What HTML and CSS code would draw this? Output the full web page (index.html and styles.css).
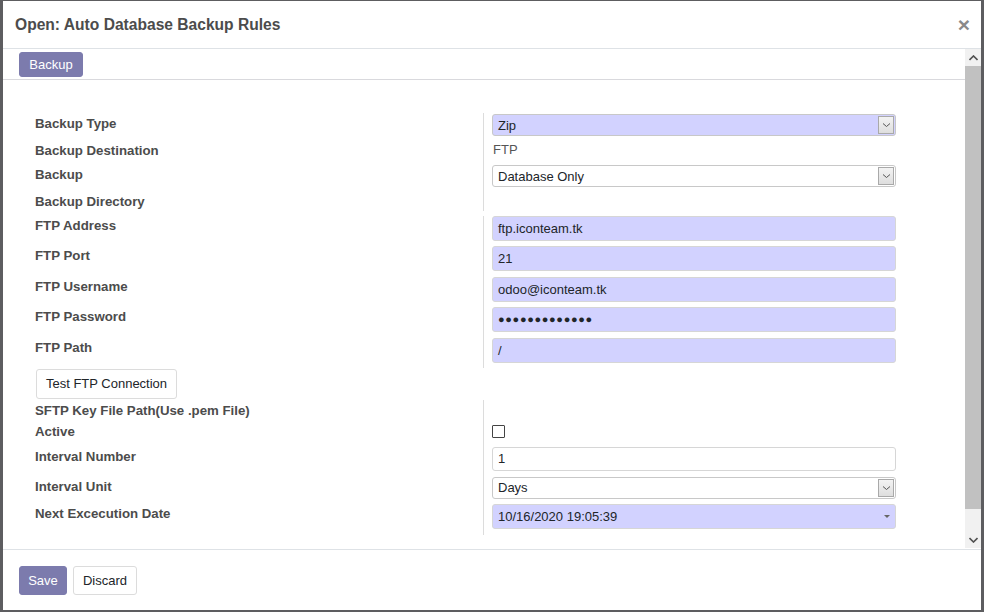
FILE: index.html
```html
<!DOCTYPE html>
<html>
<head>
<meta charset="utf-8">
<link rel="stylesheet" href="styles.css">
</head>
<body>
<div class="modal">
  <div class="modal-header">
    <h4 class="modal-title">Open: Auto Database Backup Rules</h4>
    <span class="close">×</span>
  </div>
  <div class="modal-body">
    <div class="content">
      <div class="statusbar">
        <button class="btn btn-primary">Backup</button>
      </div>
      <div class="sheet">
        <div class="group">
          <div class="row r1"><div class="label">Backup Type</div><div class="field"><div class="select req"><span>Zip</span><span class="arrow"><svg width="9" height="6" viewBox="0 0 9 6"><path d="M1 1.5 L4.5 4.5 L8 1.5" fill="none" stroke="#555" stroke-width="1"/></svg></span></div></div></div>
          <div class="row r2"><div class="label">Backup Destination</div><div class="field"><span class="value">FTP</span></div></div>
          <div class="row r3"><div class="label">Backup</div><div class="field"><div class="select"><span>Database Only</span><span class="arrow"><svg width="9" height="6" viewBox="0 0 9 6"><path d="M1 1.5 L4.5 4.5 L8 1.5" fill="none" stroke="#555" stroke-width="1"/></svg></span></div></div></div>
          <div class="row r4"><div class="label">Backup Directory</div><div class="field"></div></div>
        </div>
        <div class="group g2">
          <div class="row r5"><div class="label">FTP Address</div><div class="field"><div class="input req">ftp.iconteam.tk</div></div></div>
          <div class="row r5"><div class="label">FTP Port</div><div class="field"><div class="input req">21</div></div></div>
          <div class="row r5"><div class="label">FTP Username</div><div class="field"><div class="input req">odoo@iconteam.tk</div></div></div>
          <div class="row r5"><div class="label">FTP Password</div><div class="field"><div class="input req pw">●●●●●●●●●●●●●</div></div></div>
          <div class="row r5"><div class="label">FTP Path</div><div class="field"><div class="input req">/</div></div></div>
        </div>
        <div class="btnrow"><button class="btn btn-secondary test">Test FTP Connection</button></div>
        <div class="group">
          <div class="row r6"><div class="label">SFTP Key File Path(Use .pem File)</div><div class="field"></div></div>
        </div>
        <div class="group g4">
          <div class="row r7"><div class="label">Active</div><div class="field"><div class="checkbox"></div></div></div>
          <div class="row r8"><div class="label">Interval Number</div><div class="field"><div class="input">1</div></div></div>
          <div class="row r9"><div class="label">Interval Unit</div><div class="field"><div class="select"><span>Days</span><span class="arrow"><svg width="9" height="6" viewBox="0 0 9 6"><path d="M1 1.5 L4.5 4.5 L8 1.5" fill="none" stroke="#555" stroke-width="1"/></svg></span></div></div></div>
          <div class="row r10"><div class="label">Next Excecution Date</div><div class="field"><div class="input req date"><span>10/16/2020 19:05:39</span><span class="caret"></span></div></div></div>
        </div>
      </div>
    </div>
    <div class="scrollbar">
      <div class="sb-btn"><svg width="9" height="6" viewBox="0 0 9 6"><path d="M0.5 5 L4.5 1 L8.5 5" fill="none" stroke="#505050" stroke-width="1.6"/></svg></div>
      <div class="sb-thumb"></div>
      <div class="sb-track"></div>
      <div class="sb-btn"><svg width="9" height="6" viewBox="0 0 9 6"><path d="M0.5 1 L4.5 5 L8.5 1" fill="none" stroke="#505050" stroke-width="1.6"/></svg></div>
    </div>
  </div>
  <div class="modal-footer">
    <button class="btn btn-primary save">Save</button>
    <button class="btn btn-secondary discard">Discard</button>
  </div>
</div>
</body>
</html>
```
FILE: styles.css
```css
html, body {
  margin: 0;
  padding: 0;
}
body {
  background: #5d5d60;
  font-family: "Liberation Sans", Arial, sans-serif;
  font-size: 13px;
  color: #212529;
  width: 984px;
  height: 612px;
  overflow: hidden;
}
.modal {
  margin: 1px 3px 0 3px;
  width: 978px;
  height: 609px;
  background: #fff;
  display: flex;
  flex-direction: column;
}
.modal-header {
  height: 47px;
  border-bottom: 1px solid #dee2e6;
  display: flex;
  align-items: center;
  justify-content: space-between;
  padding: 0 11px 0 12px;
  flex-shrink: 0;
}
.modal-title {
  margin: 0;
  font-size: 15.6px;
  font-weight: bold;
  color: #4c4c4c;
}
.close {
  font-size: 21px;
  font-weight: bold;
  color: #8a8a8a;
  line-height: 1;
  margin-top: -1px;
}
.modal-body {
  flex: 1;
  display: flex;
  overflow: hidden;
}
.content {
  flex: 1;
  min-width: 0;
}
.statusbar {
  height: 27px;
  padding: 3px 16px 0;
  border-bottom: 1px solid #d9d9dd;
}
.btn {
  font-family: "Liberation Sans", Arial, sans-serif;
  font-size: 13px;
  border-radius: 3px;
  border: 1px solid transparent;
  padding: 0 10px;
  cursor: pointer;
}
.btn-primary {
  background: #7c7bad;
  color: #fff;
  border-color: #7c7bad;
}
.btn-secondary {
  background: #fff;
  color: #212529;
  border-color: #dcdcdc;
}
.statusbar .btn {
  height: 25px;
  width: 64px;
  padding: 0;
}
.sheet {
  padding: 33px 0 0 32px;
}
.group {
  display: flex;
  flex-direction: column;
}
.g2 {
  margin-top: 5px;
}
.row {
  display: flex;
}
.label {
  width: 448px;
  font-weight: bold;
  font-size: 13.25px;
  color: #4c4c4c;
  line-height: 18px;
  white-space: nowrap;
  margin-top: 1px;
}
.field {
  border-left: 1px solid #dcdcdc;
  padding-left: 8px;
  width: 404px;
}
.r1 .label, .r1 .field { padding-top: 1px; }
.r1 { height: 25px; }
.r2 .label, .r2 .field { padding-top: 3px; }
.r2 { height: 24px; }
.r3 .label, .r3 .field { padding-top: 3px; }
.r3 { height: 26px; }
.r4 .label { padding-top: 4px; }
.r4 { height: 23px; }
.r5 { height: 30.4px; }
.r6 { height: 23px; }
.r6 .label { padding-top: 1px; }
.r7 { height: 21px; }
.r7 .field { padding-top: 2px; }
.r7 .label { padding-top: 0; margin-top: 0; }
.r8 { height: 30px; }
.r8 .label, .r8 .field { padding-top: 3px; }
.r9 { height: 27px; }
.r9 .label, .r9 .field { padding-top: 3px; }
.r10 { height: 34px; }
.r10 .label, .r10 .field { padding-top: 3px; }
.value {
  line-height: 18px;
  color: #555;
  padding-left: 1px;
}
.select {
  height: 22px;
  box-sizing: border-box;
  border: 1px solid #c8c8c8;
  border-radius: 3px;
  background: #fff;
  display: flex;
  align-items: center;
  justify-content: space-between;
  padding-left: 5px;
  color: #212529;
}
.select .arrow {
  width: 16px;
  height: 18px;
  box-sizing: border-box;
  border: 1px solid #a9a9a9;
  background: linear-gradient(#f3f3f3, #dedede);
  margin-right: 1px;
  display: flex;
  align-items: center;
  justify-content: center;
}
.input {
  height: 25px;
  box-sizing: border-box;
  border: 1px solid #d6d6d6;
  border-radius: 3px;
  background: #fff;
  padding-left: 5px;
  line-height: 23px;
  color: #212529;
}
.r8 .input { height: 24px; line-height: 22px; }
.req {
  background: #d2d2ff;
}
.pw {
  font-size: 11px;
  letter-spacing: 0.65px;
}
.date {
  display: flex;
  justify-content: space-between;
  align-items: center;
}
.caret {
  width: 0;
  height: 0;
  border-left: 3px solid transparent;
  border-right: 3px solid transparent;
  border-top: 3px solid #666;
  margin-right: 5px;
}
.checkbox {
  width: 13px;
  height: 13px;
  box-sizing: border-box;
  border: 1px solid #444;
  border-radius: 1px;
  background: #fff;
}
.btnrow {
  padding: 1px 0 1px 1px;
}
.test {
  height: 30px;
  width: 141px;
  padding: 0;
}
.scrollbar {
  width: 16px;
  background: #f1f1f1;
  display: flex;
  flex-direction: column;
  margin-bottom: 1px;
}
.sb-btn {
  height: 17px;
  display: flex;
  align-items: center;
  justify-content: center;
}
.sb-thumb {
  height: 443px;
  background: #c1c1c1;
}
.sb-track {
  flex: 1;
}
.modal-footer {
  border-top: 1px solid #dee2e6;
  padding: 16px 0 0 16px;
  display: flex;
  gap: 6px;
  flex-shrink: 0;
  box-sizing: border-box;
  height: 61px;
}
.modal-footer .btn {
  height: 29px;
}
.save { width: 48px; padding: 0; }
.discard { width: 64px; padding: 0; }
```
